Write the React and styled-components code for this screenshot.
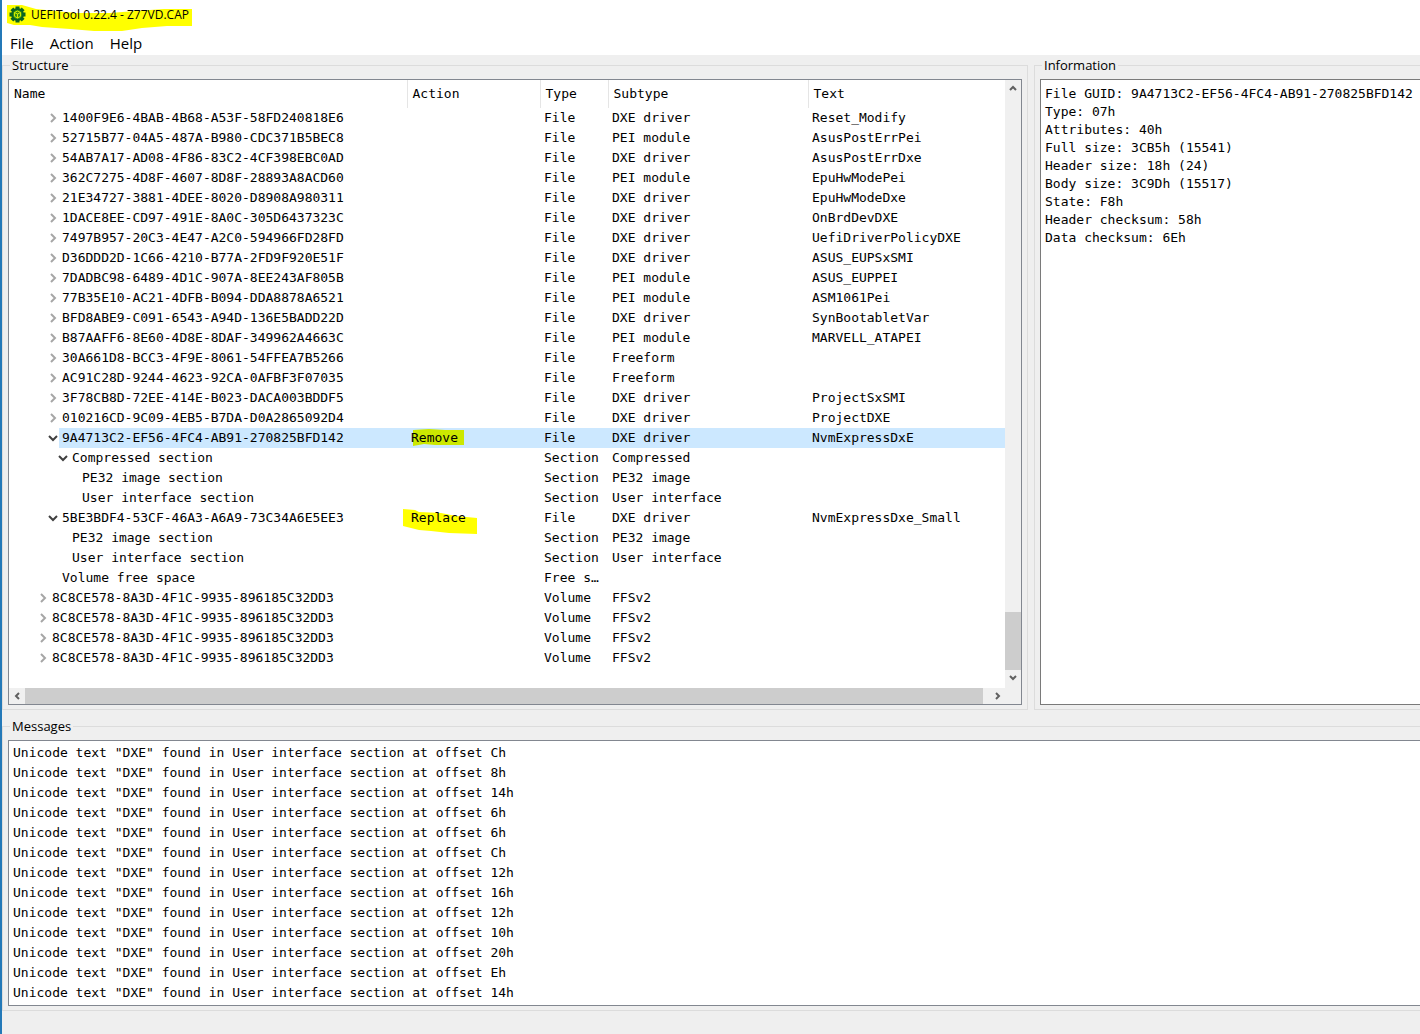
import React from 'react'
import styled, { createGlobalStyle } from 'styled-components'

const guids = [
  [3, '>', '1400F9E6-4BAB-4B68-A53F-58FD240818E6', '', 'File', 'DXE driver', 'Reset_Modify'],
  [3, '>', '52715B77-04A5-487A-B980-CDC371B5BEC8', '', 'File', 'PEI module', 'AsusPostErrPei'],
  [3, '>', '54AB7A17-AD08-4F86-83C2-4CF398EBC0AD', '', 'File', 'DXE driver', 'AsusPostErrDxe'],
  [3, '>', '362C7275-4D8F-4607-8D8F-28893A8ACD60', '', 'File', 'PEI module', 'EpuHwModePei'],
  [3, '>', '21E34727-3881-4DEE-8020-D8908A980311', '', 'File', 'DXE driver', 'EpuHwModeDxe'],
  [3, '>', '1DACE8EE-CD97-491E-8A0C-305D6437323C', '', 'File', 'DXE driver', 'OnBrdDevDXE'],
  [3, '>', '7497B957-20C3-4E47-A2C0-594966FD28FD', '', 'File', 'DXE driver', 'UefiDriverPolicyDXE'],
  [3, '>', 'D36DDD2D-1C66-4210-B77A-2FD9F920E51F', '', 'File', 'DXE driver', 'ASUS_EUPSxSMI'],
  [3, '>', '7DADBC98-6489-4D1C-907A-8EE243AF805B', '', 'File', 'PEI module', 'ASUS_EUPPEI'],
  [3, '>', '77B35E10-AC21-4DFB-B094-DDA8878A6521', '', 'File', 'PEI module', 'ASM1061Pei'],
  [3, '>', 'BFD8ABE9-C091-6543-A94D-136E5BADD22D', '', 'File', 'DXE driver', 'SynBootabletVar'],
  [3, '>', 'B87AAFF6-8E60-4D8E-8DAF-349962A4663C', '', 'File', 'PEI module', 'MARVELL_ATAPEI'],
  [3, '>', '30A661D8-BCC3-4F9E-8061-54FFEA7B5266', '', 'File', 'Freeform', ''],
  [3, '>', 'AC91C28D-9244-4623-92CA-0AFBF3F07035', '', 'File', 'Freeform', ''],
  [3, '>', '3F78CB8D-72EE-414E-B023-DACA003BDDF5', '', 'File', 'DXE driver', 'ProjectSxSMI'],
  [3, '>', '010216CD-9C09-4EB5-B7DA-D0A2865092D4', '', 'File', 'DXE driver', 'ProjectDXE'],
  [3, 'v', '9A4713C2-EF56-4FC4-AB91-270825BFD142', 'Remove', 'File', 'DXE driver', 'NvmExpressDxE'],
  [4, 'v', 'Compressed section', '', 'Section', 'Compressed', ''],
  [5, '', 'PE32 image section', '', 'Section', 'PE32 image', ''],
  [5, '', 'User interface section', '', 'Section', 'User interface', ''],
  [3, 'v', '5BE3BDF4-53CF-46A3-A6A9-73C34A6E5EE3', 'Replace', 'File', 'DXE driver', 'NvmExpressDxe_Small'],
  [4, '', 'PE32 image section', '', 'Section', 'PE32 image', ''],
  [4, '', 'User interface section', '', 'Section', 'User interface', ''],
  [3, '', 'Volume free space', '', 'Free s…', '', ''],
  [2, '>', '8C8CE578-8A3D-4F1C-9935-896185C32DD3', '', 'Volume', 'FFSv2', ''],
  [2, '>', '8C8CE578-8A3D-4F1C-9935-896185C32DD3', '', 'Volume', 'FFSv2', ''],
  [2, '>', '8C8CE578-8A3D-4F1C-9935-896185C32DD3', '', 'Volume', 'FFSv2', ''],
  [2, '>', '8C8CE578-8A3D-4F1C-9935-896185C32DD3', '', 'Volume', 'FFSv2', ''],
]

const info = [
  'File GUID: 9A4713C2-EF56-4FC4-AB91-270825BFD142',
  'Type: 07h',
  'Attributes: 40h',
  'Full size: 3CB5h (15541)',
  'Header size: 18h (24)',
  'Body size: 3C9Dh (15517)',
  'State: F8h',
  'Header checksum: 58h',
  'Data checksum: 6Eh',
]

const offsets = ['Ch', '8h', '14h', '6h', '6h', 'Ch', '12h', '16h', '12h', '10h', '20h', 'Eh', '14h']

const selected = 16

const arrows = {
  '>': 'M3 1L7 5L3 9',
  v: 'M1 3L5 7L9 3',
  '<': 'M7 2L4 5L7 8',
  '^': 'M2 7L5 4L8 7',
  scrollDown: 'M2 3L5 6L8 3',
  scrollRight: 'M4 2L7 5L4 8',
}

const Arrow = ({ dir, color }) => (
  <svg width="10" height="10" viewBox="0 0 10 10" aria-hidden="true">
    <path d={arrows[dir]} fill="none" stroke={color} strokeWidth="2" />
  </svg>
)

const marks = {
  Remove: { width: 60, height: 20, points: '2,2 18,1 34,2 53,2 53,17 24,17 13,16 2,18' },
  Replace: { width: 80, height: 30, points: '-8,1 4,2 8,4 30,5 45,8 66,10 66,26 38,25 20,23 8,22 -8,18' },
}

const teeth = [0, 45, 90, 135, 180, 225, 270, 315]

const Logo = () => (
  <LogoSvg width="17" height="17" viewBox="0 0 17 17" aria-hidden="true">
    {teeth.map((angle) => (
      <rect key={angle} x="6.5" y="0.5" width="4" height="4" fill="#0a6423" transform={`rotate(${angle} 8.5 8.5)`} />
    ))}
    <circle cx="8.5" cy="8.5" r="6.4" fill="#0a6423" />
    <circle cx="8.5" cy="8.5" r="4.6" fill="#3a9110" />
    <path d="M8.5 5L11.5 6.5V10.3L8.5 12L5.5 10.3V6.5ZM5.5 6.5L8.5 8L11.5 6.5M8.5 8V12" fill="none" stroke="#d0ec00" strokeWidth="1" />
  </LogoSvg>
)

const App = () => {
  return (
    <>
      <GlobalStyle />
      <Window>
        <TitleBar>
          <TitleMark width="192" height="32" aria-hidden="true">
            <polygon points="5,5 20,5 34,9 73,13 108,13 133,11 162,9 190,9 190,26 165,26 140,28 120,31 92,31 68,29 40,27 28,25 12,25 5,23" fill="#ffff00" />
          </TitleMark>
          <Logo />
          <Title>UEFITool 0.22.4 - Z77VD.CAP</Title>
        </TitleBar>
        <MenuBar>
          <MenuButton>File</MenuButton>
          <MenuButton>Action</MenuButton>
          <MenuButton>Help</MenuButton>
        </MenuBar>
        <Panels>
          <Group>
            <Legend>Structure</Legend>
            <TreeFrame>
              <TreeBody>
                <TreeTable>
                  <colgroup>
                    <Col $w="398px" />
                    <Col $w="133px" />
                    <Col $w="68px" />
                    <Col $w="200px" />
                    <col />
                  </colgroup>
                  <thead>
                    <tr>
                      <HeadCell>Name</HeadCell>
                      <HeadCell>Action</HeadCell>
                      <HeadCell>Type</HeadCell>
                      <HeadCell>Subtype</HeadCell>
                      <HeadCell>Text</HeadCell>
                    </tr>
                  </thead>
                  <tbody>
                    {guids.map(([level, arrow, name, action, type, subtype, text], i) => (
                      <Row key={i} $selected={i === selected}>
                        <NameCell>
                          <NameLine>
                            <Branch $level={level}>
                              {arrow && <Arrow dir={arrow} color={arrow === 'v' ? '#404040' : '#a6a6a6'} />}
                            </Branch>
                            <Name>{name}</Name>
                          </NameLine>
                        </NameCell>
                        <Cell>
                          {action && (
                            <Marked>
                              <Mark width={marks[action].width} height={marks[action].height} aria-hidden="true">
                                <polygon points={marks[action].points} fill={i === selected ? '#cce800' : '#ffff00'} />
                              </Mark>
                              <MarkedText>{action}</MarkedText>
                            </Marked>
                          )}
                        </Cell>
                        <Cell>{type}</Cell>
                        <Cell>{subtype}</Cell>
                        <Cell>{text}</Cell>
                      </Row>
                    ))}
                  </tbody>
                </TreeTable>
              </TreeBody>
              <VScroll>
                <ScrollButton aria-label="Scroll up"><Arrow dir="^" color="#606060" /></ScrollButton>
                <VThumb />
                <ScrollButton aria-label="Scroll down"><Arrow dir="scrollDown" color="#606060" /></ScrollButton>
              </VScroll>
              <HScroll>
                <ScrollButton aria-label="Scroll left"><Arrow dir="<" color="#606060" /></ScrollButton>
                <HThumb />
                <ScrollButton aria-label="Scroll right"><Arrow dir="scrollRight" color="#606060" /></ScrollButton>
              </HScroll>
              <Corner />
            </TreeFrame>
          </Group>
          <Group $open>
            <Legend>Information</Legend>
            <InfoFrame>
              {info.map((line) => (
                <InfoLine key={line}>{line}</InfoLine>
              ))}
            </InfoFrame>
          </Group>
        </Panels>
        <Group $open>
          <Legend>Messages</Legend>
          <MessageList>
            {offsets.map((offset, i) => (
              <Message key={i}>Unicode text "DXE" found in User interface section at offset {offset}</Message>
            ))}
          </MessageList>
        </Group>
        <StatusBar />
      </Window>
    </>
  )
}

export default App

const GlobalStyle = createGlobalStyle`
* {
  box-sizing: border-box;
}
body {
  margin: 0;
  background: #efefef;
  color: #000;
  font-family: "Open Sans", "Noto Sans", sans-serif;
}
`

const Window = styled.main`
display: flex;
flex-direction: column;
min-height: 100vh;
border-left: 2px solid #2479b8;
background: #efefef;
overflow: hidden;
`

const TitleBar = styled.header`
position: relative;
display: flex;
align-items: center;
gap: 5px;
height: 31px;
padding: 0 7px 2px;
background: #fff;
`

const TitleMark = styled.svg`
position: absolute;
left: 0;
top: 0;
`

const LogoSvg = styled.svg`
position: relative;
flex: none;
`

const Title = styled.h1`
position: relative;
margin: 0;
font-size: 12px;
font-weight: 400;
line-height: 16px;
`

const MenuBar = styled.nav`
display: flex;
gap: 16px;
height: 24px;
padding: 0 8px;
background: #fff;
`

const MenuButton = styled.button`
border: 0;
padding: 0;
background: none;
color: #000;
font: 15px/24px "Open Sans", "Noto Sans", sans-serif;
`

const Panels = styled.div`
display: grid;
grid-template-columns: minmax(0, 1fr) 386px;
gap: 6px;
margin-bottom: 6px;
`

const Group = styled.fieldset`
display: flex;
flex-direction: column;
min-width: 0;
margin: 0;
border: 1px solid #dcdcdc;
padding: 4px 5px;
${({ $open }) => $open && `
border-right: 0;
padding-right: 0;
`}
`

const Legend = styled.legend`
margin-left: 2px;
padding: 0 2px;
font-size: 13px;
line-height: 20px;
`

const TreeFrame = styled.div`
display: grid;
grid-template-columns: minmax(0, 1fr) 16px;
border: 1px solid #828790;
background: #fff;
`

const TreeBody = styled.div`
min-width: 0;
padding-bottom: 20px;
overflow: hidden;
`

const TreeTable = styled.table`
width: 100%;
table-layout: fixed;
border-collapse: collapse;
font: 13px/20px "DejaVu Sans Mono", monospace;
white-space: nowrap;
`

const Col = styled.col`
width: ${({ $w }) => $w};
`

const HeadCell = styled.th`
height: 28px;
padding: 0 5px;
border-right: 1px solid #e5e5e5;
font-weight: 400;
text-align: left;
&:last-child {
  border-right: 0;
}
`

const Cell = styled.td`
height: 20px;
padding: 0 4px;
`

const NameCell = styled(Cell)`
padding: 0;
`

const NameLine = styled.div`
display: flex;
`

const Branch = styled.span`
display: flex;
align-items: center;
justify-content: flex-end;
width: ${({ $level }) => $level * 10 + 20}px;
padding-right: 1px;
background: #fff;
`

const Name = styled.span`
flex: 1;
padding-left: 3px;
`

const Row = styled.tr`
background: ${({ $selected }) => ($selected ? '#cce8ff' : '#fff')};
`

const Marked = styled.div`
position: relative;
height: 20px;
`

const Mark = styled.svg`
position: absolute;
left: 0;
top: 0;
overflow: visible;
`

const MarkedText = styled.span`
position: relative;
`

const VScroll = styled.div`
display: flex;
flex-direction: column;
padding-bottom: 2px;
background: #f0f0f0;
`

const HScroll = styled.div`
display: flex;
background: #f0f0f0;
`

const ScrollButton = styled.button`
display: flex;
align-items: center;
justify-content: center;
flex: none;
width: 16px;
height: 16px;
border: 0;
padding: 0;
background: #f0f0f0;
`

const VThumb = styled.div`
height: 58px;
margin-top: auto;
background: #cdcdcd;
`

const HThumb = styled.div`
flex: 1;
margin-right: 6px;
background: #cdcdcd;
`

const Corner = styled.div`
background: #f0f0f0;
`

const InfoFrame = styled.div`
flex: 1;
border: 1px solid #7a7a7a;
border-right: 0;
padding: 5px 4px;
background: #fff;
font: 13px/18px "DejaVu Sans Mono", monospace;
white-space: nowrap;
overflow: hidden;
`

const InfoLine = styled.div`
height: 18px;
`

const MessageList = styled.ul`
margin: 0;
border: 1px solid #828790;
border-right: 0;
padding: 2px 4px;
background: #fff;
font: 13px/20px "DejaVu Sans Mono", monospace;
list-style: none;
`

const Message = styled.li`
height: 20px;
`

const StatusBar = styled.footer`
flex: 1;
`
